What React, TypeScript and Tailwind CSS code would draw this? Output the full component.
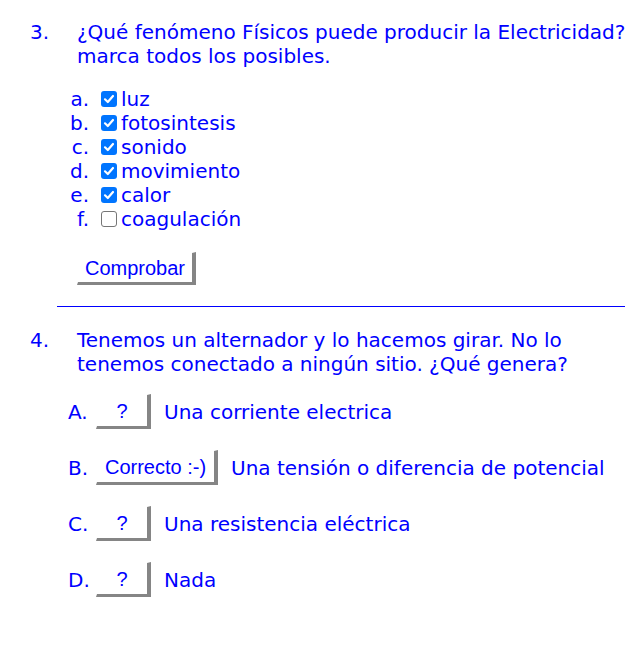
import React from "react";

function Check({ checked }: { checked: boolean }) {
  if (!checked)
    return (
      <span className="inline-block w-4 h-4 rounded-[3px] border border-[#767676] bg-white" />
    );
  return (
    <span className="inline-flex items-center justify-center w-4 h-4 rounded-[3px] bg-[#0075ff]">
      <svg width="12" height="12" viewBox="0 0 12 12">
        <path d="M2 6.3 L4.8 9 L10 3" stroke="white" strokeWidth="2.2" fill="none" strokeLinecap="round" strokeLinejoin="round" />
      </svg>
    </span>
  );
}

function Btn({ children, w, h }: { children: React.ReactNode; w: string; h: string }) {
  return (
    <span
      className={`inline-flex items-center justify-center ${h} ${w} bg-white border-t border-l border-t-white border-l-white border-r-[4px] border-b-[3px] border-r-[#858585] border-b-[#858585] font-['Liberation_Sans',Arial,sans-serif] text-[20px] text-[#0000ff]`}
    >
      {children}
    </span>
  );
}

export default function App() {
  const opts3: [string, string, boolean][] = [
    ["a.", "luz", true],
    ["b.", "fotosintesis", true],
    ["c.", "sonido", true],
    ["d.", "movimiento", true],
    ["e.", "calor", true],
    ["f.", "coagulación", false],
  ];
  const opts4: [string, string, string, string][] = [
    ["A.", "?", "w-[55px]", "Una corriente electrica"],
    ["B.", "Correcto :-)", "w-[122px]", "Una tensión o diferencia de potencial"],
    ["C.", "?", "w-[55px]", "Una resistencia eléctrica"],
    ["D.", "?", "w-[55px]", "Nada"],
  ];
  return (
    <div className="w-[625px] h-[651px] bg-white text-[#0000ff] font-['DejaVu_Sans',sans-serif] text-[20px] leading-6 overflow-hidden">
      <div className="pt-[20px] flex">
        <div className="w-[77px] pl-[30px] shrink-0">3.</div>
        <div className="whitespace-nowrap">
          ¿Qué fenómeno Físicos puede producir la Electricidad?
          <br />
          marca todos los posibles.
        </div>
      </div>
      <div className="mt-[19px] flex flex-col">
        {opts3.map(([l, t, c]) => (
          <div key={l} className="flex items-center h-6">
            <span className="w-[89px] text-right shrink-0">{l}</span>
            <span className="ml-[12px] mr-[4px] flex items-center">
              <Check checked={c} />
            </span>
            <span>{t}</span>
          </div>
        ))}
      </div>
      <div className="mt-[21px] pl-[77px] flex">
        <Btn w="w-[119px]" h="h-[33px]">Comprobar</Btn>
      </div>
      <div className="mt-[21px] ml-[57px] border-t border-solid border-[#0000ff]" />
      <div className="mt-[21px] flex">
        <div className="w-[77px] pl-[30px] shrink-0">4.</div>
        <div className="whitespace-nowrap">
          Tenemos un alternador y lo hacemos girar. No lo
          <br />
          tenemos conectado a ningún sitio. ¿Qué genera?
        </div>
      </div>
      <div className="mt-[18px] flex flex-col gap-[21px]">
        {opts4.map(([l, b, w, t]) => (
          <div key={l} className="flex items-center">
            <span className="w-[96px] pl-[68px] shrink-0">{l}</span>
            <Btn w={w} h="h-[35px]">{b}</Btn>
            <span className="ml-[13px] whitespace-nowrap">{t}</span>
          </div>
        ))}
      </div>
    </div>
  );
}
